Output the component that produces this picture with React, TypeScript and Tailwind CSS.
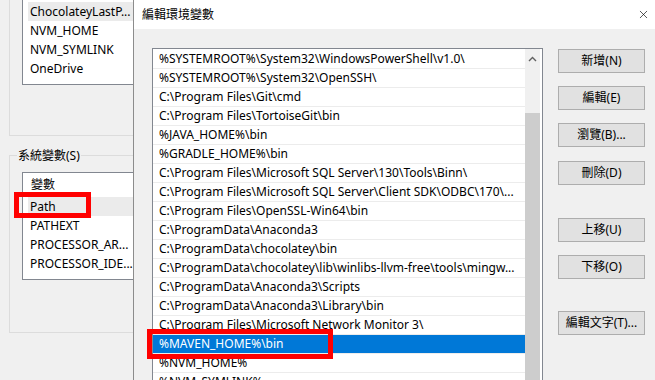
import { X } from "lucide-react"

const userVars = ["ChocolateyLastP...", "NVM_HOME", "NVM_SYMLINK", "OneDrive", "Path"]

const systemVars = ["Path", "PATHEXT", "PROCESSOR_AR...", "PROCESSOR_IDE..."]

const paths = [
  "%SYSTEMROOT%\\System32\\WindowsPowerShell\\v1.0\\",
  "%SYSTEMROOT%\\System32\\OpenSSH\\",
  "C:\\Program Files\\Git\\cmd",
  "C:\\Program Files\\TortoiseGit\\bin",
  "%JAVA_HOME%\\bin",
  "%GRADLE_HOME%\\bin",
  "C:\\Program Files\\Microsoft SQL Server\\130\\Tools\\Binn\\",
  "C:\\Program Files\\Microsoft SQL Server\\Client SDK\\ODBC\\170\\...",
  "C:\\Program Files\\OpenSSL-Win64\\bin",
  "C:\\ProgramData\\Anaconda3",
  "C:\\ProgramData\\chocolatey\\bin",
  "C:\\ProgramData\\chocolatey\\lib\\winlibs-llvm-free\\tools\\mingw...",
  "C:\\ProgramData\\Anaconda3\\Scripts",
  "C:\\ProgramData\\Anaconda3\\Library\\bin",
  "C:\\Program Files\\Microsoft Network Monitor 3\\",
  "%MAVEN_HOME%\\bin",
  "%NVM_HOME%",
  "%NVM_SYMLINK%",
]

const selectedIndex = 15

// buttons with the top margin that separates them from the one above
const buttons = [
  { label: "新增(N)", mt: "mt-[1px]" },
  { label: "編輯(E)", mt: "mt-[13px]" },
  { label: "瀏覽(B)...", mt: "mt-[13px]" },
  { label: "刪除(D)", mt: "mt-[14px]" },
  { label: "上移(U)", mt: "mt-[33px]" },
  { label: "下移(O)", mt: "mt-[13px]" },
  { label: "編輯文字(T)...", mt: "mt-[32px]" },
]

function EnvVarsWindow() {
  return (
    <div className="absolute inset-0 pl-[9px]">
      {/* 使用者變數 group, top cut off */}
      <div className="h-[136px] w-[300px] border-l border-b border-[#dcdcdc] pl-[12px]">
        <div className="h-[85px] w-[200px] bg-white border-l border-b border-[#828790] pt-[2px] overflow-hidden">
          {userVars.map((name, i) => (
            <div
              key={name}
              className={`h-[19px] leading-[19px] ml-[5px] pl-[2px] whitespace-nowrap ${i === 0 ? "bg-[#ebebeb]" : ""} ${
                i === userVars.length - 1 ? "pt-[3px]" : ""
              }`}
            >
              {name}
            </div>
          ))}
        </div>
      </div>

      {/* 系統變數 group */}
      <div className="relative mt-[19px] h-[178px] w-[300px] border border-[#dcdcdc] pl-[12px] pt-[16px]">
        <span className="absolute left-[7px] -top-[10px] bg-[#f0f0f0] px-[1px] leading-[19px]">系統變數(S)</span>
        <div className="h-[108px] w-[200px] bg-white border border-[#828790] overflow-hidden">
          <div className="h-[24px] leading-[23px] pl-[8px]">變數</div>
          {systemVars.map((name, i) => (
            <div
              key={name}
              className={`h-[19px] leading-[19px] ml-[5px] pl-[2px] whitespace-nowrap ${i === 0 ? "bg-[#ebebeb]" : ""}`}
            >
              {name}
            </div>
          ))}
        </div>
      </div>
    </div>
  )
}

function EditDialog() {
  return (
    <div className="absolute left-[133px] top-0 w-[540px] h-[400px] border-l border-[#8c8c8c] bg-[#f0f0f0]">
      <div className="h-[29px] bg-white flex items-center pl-[8px]">
        <span className="leading-[20px]">編輯環境變數</span>
        <X size={13} strokeWidth={1.2} className="ml-auto mr-[23px] text-black" />
      </div>

      <div className="flex pl-[18px] pt-[19px]">
        <div className="w-[391px] h-[360px] bg-white border border-[#828790] flex overflow-hidden">
          <div className="w-[372px] pt-[1px]">
            {paths.map((p, i) => (
              <div
                key={p}
                className={`h-[19px] border-b border-[#ececec] leading-[18px] pl-[6px] whitespace-nowrap overflow-hidden ${
                  i === selectedIndex ? "bg-[#0078d7] text-white" : ""
                }`}
              >
                {p}
              </div>
            ))}
          </div>
          {/* scrollbar */}
          <div className="w-[15px] bg-[#f0f0f0] flex flex-col">
            <div className="h-[20px] flex items-center justify-center">
              <svg width="9" height="6" viewBox="0 0 9 6">
                <path d="M1 5 L4.5 1.5 L8 5" fill="none" stroke="#606060" strokeWidth="1.4" />
              </svg>
            </div>
            <div className="h-[44px]" />
            <div className="flex-1 bg-[#cdcdcd]" />
          </div>
        </div>

        <div className="ml-[15px] flex flex-col">
          {buttons.map((b) => (
            <div
              key={b.label}
              className={`${b.mt} w-[87px] h-[24px] bg-[#e1e1e1] border border-[#adadad] flex items-center justify-center`}
            >
              {b.label}
            </div>
          ))}
        </div>
      </div>
    </div>
  )
}

export default function App() {
  return (
    <div className="relative w-[655px] h-[380px] overflow-hidden bg-[#f0f0f0] text-[12px] text-black font-['Noto_Sans','Noto_Sans_CJK_TC',sans-serif]">
      <EnvVarsWindow />
      <EditDialog />

      {/* red annotation boxes */}
      <div className="absolute left-[14px] top-[192px] w-[77px] h-[26px] border-[5px] border-[#ff0000]" />
      <div className="absolute left-[147px] top-[329px] w-[186px] h-[30px] border-[5px] border-[#ff0000]" />
    </div>
  )
}
